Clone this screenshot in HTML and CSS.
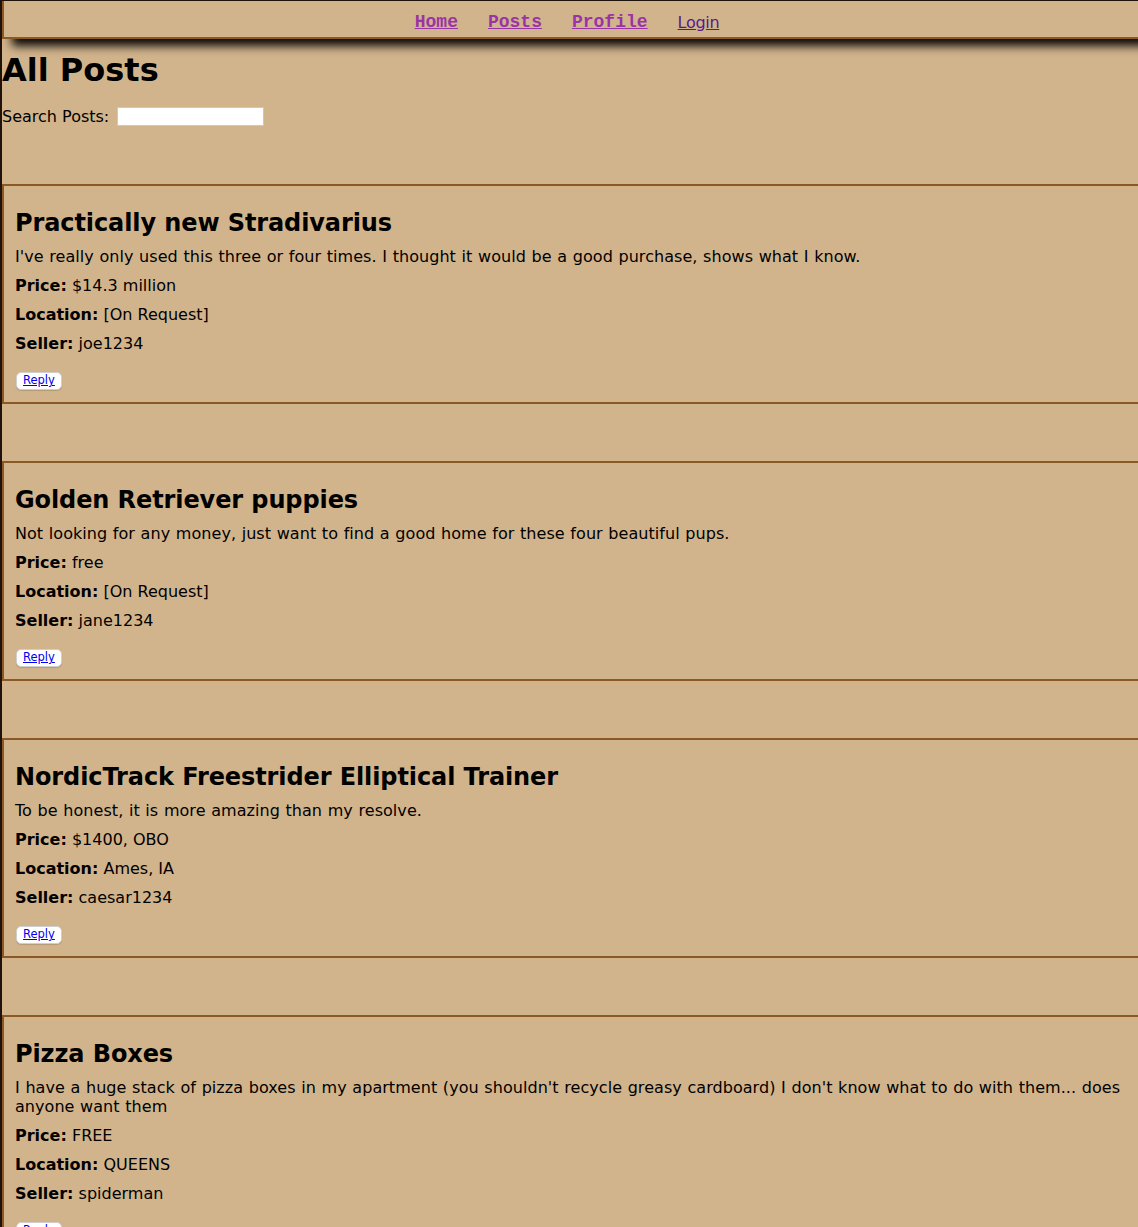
FILE: index.html
```html
<!DOCTYPE html>
<html lang="en">
<head>
<meta charset="utf-8">
<title>All Posts</title>
<link rel="stylesheet" href="styles.css">
</head>
<body>
<nav class="topnav">
  <a class="navlink mono" href="#home">Home</a>
  <a class="navlink mono" href="#posts">Posts</a>
  <a class="navlink mono" href="#profile">Profile</a>
  <a class="navlink login" href="#login">Login</a>
</nav>
<h1 class="page-title">All Posts</h1>
<div class="search-row">
  <label for="search" class="search-label">Search Posts:</label>
  <input id="search" class="search-input" type="text">
</div>
<div class="posts">
  <div class="post">
    <h2 class="post-title">Practically new Stradivarius</h2>
    <p class="post-line desc">I've really only used this three or four times. I thought it would be a good purchase, shows what I know.</p>
    <p class="post-line"><b>Price:</b> $14.3 million</p>
    <p class="post-line"><b>Location:</b> [On Request]</p>
    <p class="post-line"><b>Seller:</b> joe1234</p>
    <div class="reply-wrap"><span class="reply-btn"><a href="#reply">Reply</a></span></div>
  </div>
  <div class="post">
    <h2 class="post-title">Golden Retriever puppies</h2>
    <p class="post-line desc">Not looking for any money, just want to find a good home for these four beautiful pups.</p>
    <p class="post-line"><b>Price:</b> free</p>
    <p class="post-line"><b>Location:</b> [On Request]</p>
    <p class="post-line"><b>Seller:</b> jane1234</p>
    <div class="reply-wrap"><span class="reply-btn"><a href="#reply">Reply</a></span></div>
  </div>
  <div class="post">
    <h2 class="post-title">NordicTrack Freestrider Elliptical Trainer</h2>
    <p class="post-line desc">To be honest, it is more amazing than my resolve.</p>
    <p class="post-line"><b>Price:</b> $1400, OBO</p>
    <p class="post-line"><b>Location:</b> Ames, IA</p>
    <p class="post-line"><b>Seller:</b> caesar1234</p>
    <div class="reply-wrap"><span class="reply-btn"><a href="#reply">Reply</a></span></div>
  </div>
  <div class="post">
    <h2 class="post-title">Pizza Boxes</h2>
    <p class="post-line desc">I have a huge stack of pizza boxes in my apartment (you shouldn't recycle greasy cardboard) I don't know what to do with them... does anyone want them</p>
    <p class="post-line"><b>Price:</b> FREE</p>
    <p class="post-line"><b>Location:</b> QUEENS</p>
    <p class="post-line"><b>Seller:</b> spiderman</p>
    <div class="reply-wrap"><span class="reply-btn"><a href="#reply">Reply</a></span></div>
  </div>
</div>
</body>
</html>
```
FILE: styles.css
```css
html {
  background: #1e120b;
}
body {
  margin: 1px 0 0 2px;
  background: #d2b48c;
  font-family: "DejaVu Sans", Verdana, sans-serif;
  font-size: 16px;
  color: #000;
  min-height: 1300px;
}
.topnav {
  height: 30px;
  border-left: 2px solid #8b5a24;
  border-bottom: 2px solid #8b5a24;
  box-shadow: 10px 7px 9px rgba(0, 0, 0, 0.95);
  display: flex;
  justify-content: center;
  align-items: center;
  gap: 30px;
  padding: 6px 8px 0 0;
  position: relative;
  background: #d2b48c;
}
.navlink {
  text-decoration: underline;
}
.mono {
  font-family: "Liberation Mono", "Courier New", monospace;
  font-weight: bold;
  font-size: 18px;
  color: #9a33a6;
}
.login {
  font-family: "DejaVu Sans", Verdana, sans-serif;
  font-size: 16px;
  color: #551a8b;
  letter-spacing: -0.3px;
}
.page-title {
  font-size: 32px;
  font-weight: bold;
  margin: 13px 0 0 0;
  line-height: 37px;
}
.search-row {
  display: flex;
  align-items: center;
  margin: 17px 0 0 0;
  height: 21px;
}
.search-label {
  line-height: 19px;
}
.search-input {
  margin-left: 8px;
  width: 143px;
  height: 15px;
  padding: 1px;
  border: 1px solid #c9c9c9;
  background: #fff;
}
.posts {
  margin-top: 57px;
}
.post {
  border-top: 2px solid #8b5a24;
  border-bottom: 2px solid #8b5a24;
  border-left: 2px solid #8b5a24;
  padding: 0 11px 12px 11px;
  margin: 0 0 57px 0;
}
.post-title {
  font-size: 24px;
  line-height: 28px;
  margin: 23px 0 10px;
  letter-spacing: -0.1px;
}
.post-line {
  margin: 0 0 10px;
  line-height: 19px;
}
.desc {
  word-spacing: 0.5px;
  letter-spacing: 0.05px;
}
.reply-wrap {
  padding-top: 9px;
  margin-left: 1px;
  display: flex;
}
.reply-btn {
  display: inline-block;
  background: #fff;
  border: 1px solid #cfcfcf;
  border-radius: 5px;
  padding: 1px 6px 2px 6px;
  line-height: 13px;
  font-size: 11.5px;
  box-shadow: 0 1px 1px rgba(0, 0, 0, 0.15);
}
.reply-btn a {
  color: #0000ee;
}
```
